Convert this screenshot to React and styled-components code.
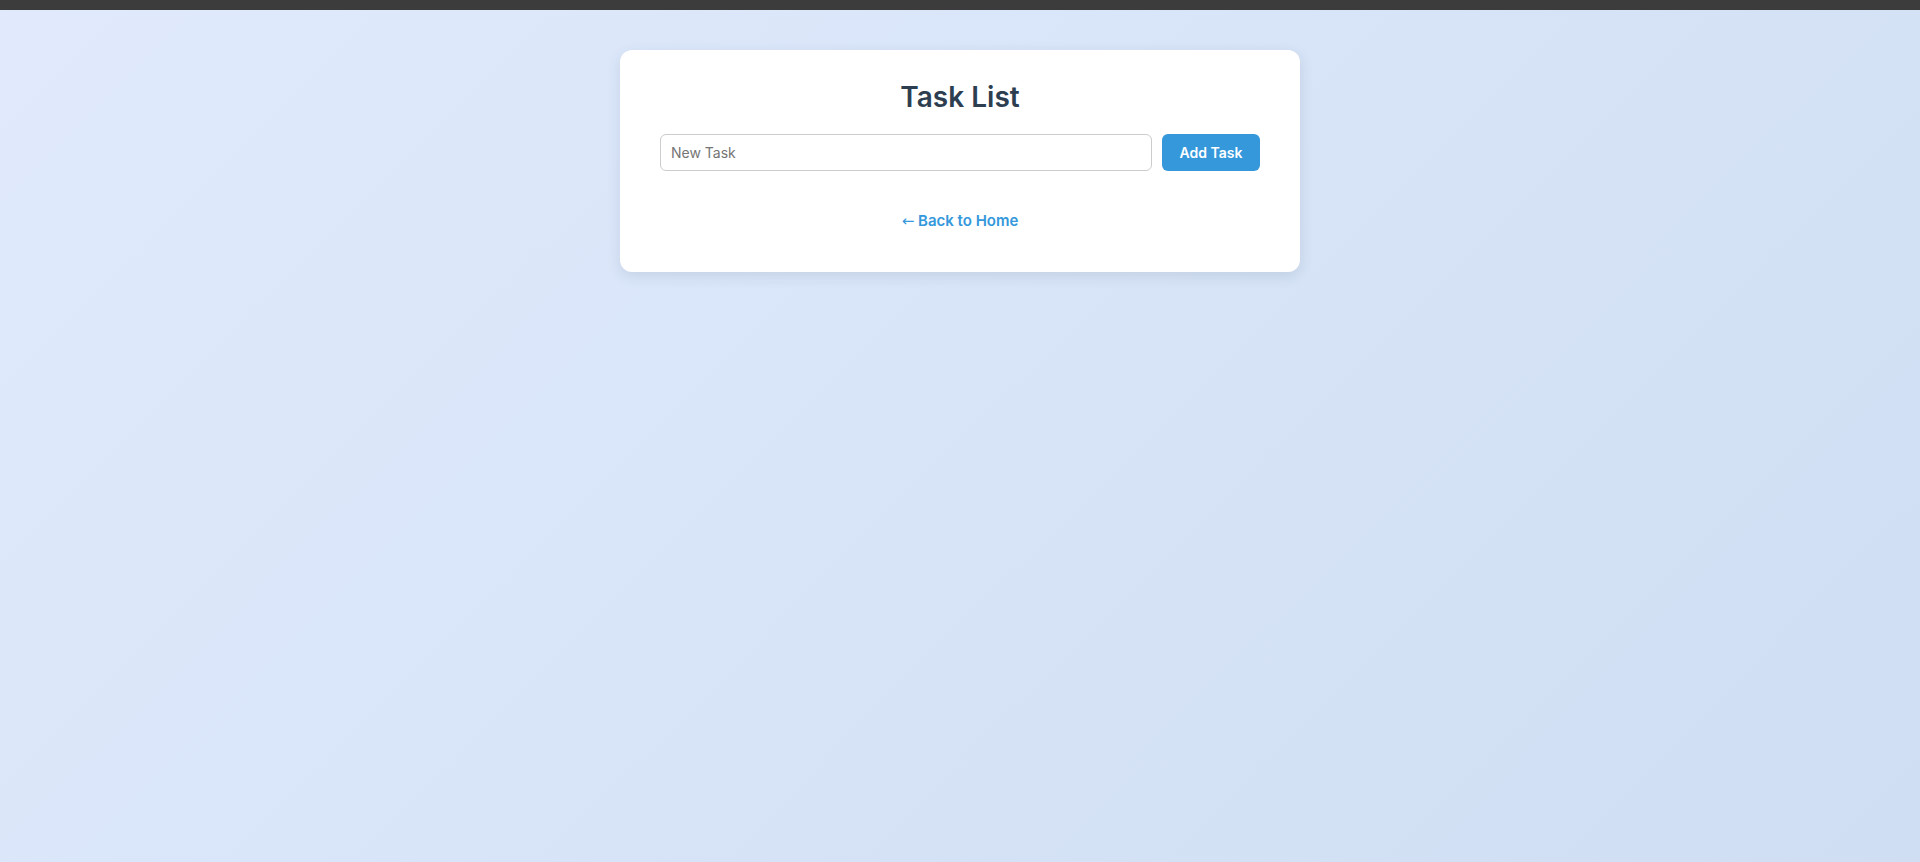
import React, { useState } from "react";
import styled, { createGlobalStyle } from "styled-components";

const GlobalStyle = createGlobalStyle`
  * {
    box-sizing: border-box;
  }

  html,
  body {
    margin: 0;
    padding: 0;
    min-height: 100%;
  }

  body {
    font-family: Inter, "Liberation Sans", sans-serif;
    background: linear-gradient(135deg, #e0eafc 0%, #cfdef3 100%);
    min-height: 862px;
  }
`;

export default function App() {
  const [task, setTask] = useState("");

  return (
    <Page>
      <GlobalStyle />
      <TopBar />
      <Main>
        <Card>
          <Title>Task List</Title>
          <TaskForm onSubmit={e => e.preventDefault()}>
            <TaskInput
              type="text"
              placeholder="New Task"
              value={task}
              onChange={e => setTask(e.target.value)}
            />
            <AddButton type="submit">Add Task</AddButton>
          </TaskForm>
          <BackLink href="#">
            <Arrow>←</Arrow> Back to Home
          </BackLink>
        </Card>
      </Main>
    </Page>
  );
}

const Page = styled.div`
  min-height: 862px;
  display: flex;
  flex-direction: column;
`;

const TopBar = styled.div`
  height: 10px;
  background: #3c3c3c;
`;

const Main = styled.main`
  display: flex;
  justify-content: center;
  padding-top: 40px;
`;

const Card = styled.div`
  width: 680px;
  padding: 30px 40px 41px;
  background: #fff;
  border-radius: 12px;
  box-shadow: 0 4px 14px rgba(44, 62, 80, 0.12);
  display: flex;
  flex-direction: column;
`;

const Title = styled.h2`
  margin: 0 0 20px;
  text-align: center;
  font-size: 28px;
  font-weight: 600;
  line-height: 34px;
  color: #2c3e50;
`;

const TaskForm = styled.form`
  display: flex;
  gap: 10px;
  margin: 0;
`;

const TaskInput = styled.input`
  flex: 1;
  height: 37px;
  padding: 0 10px;
  border: 1px solid #ccc;
  border-radius: 6px;
  font-family: inherit;
  font-size: 14px;
  color: #333;
  outline: none;

  &::placeholder {
    color: #757575;
  }
`;

const AddButton = styled.button`
  width: 98px;
  height: 37px;
  border: none;
  border-radius: 6px;
  background: #3498db;
  color: #fff;
  font-family: inherit;
  font-size: 14px;
  font-weight: 600;
  cursor: pointer;
`;

const BackLink = styled.a`
  align-self: center;
  margin-top: 40px;
  font-size: 15px;
  line-height: 19px;
  font-weight: 600;
  color: #3498db;
  text-decoration: none;
`;

const Arrow = styled.span`
  font-family: "DejaVu Sans", sans-serif;
  font-weight: 400;
`;
